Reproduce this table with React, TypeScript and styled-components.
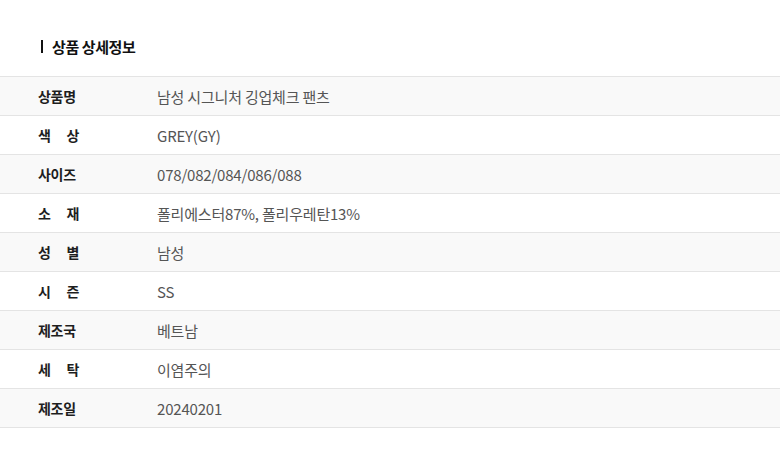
import { createGlobalStyle } from 'styled-components';
import styled from 'styled-components';

const GlobalStyle = createGlobalStyle`
  html, body {
    margin: 0;
    padding: 0;
    background: #fff;
  }
  body {
    font-family: 'Noto Sans CJK KR', 'Noto Sans', sans-serif;
  }
`;

const Root = styled.section`
  padding-top: 36px;
  width: 780px;
`;

const Title = styled.h3`
  display: flex;
  align-items: center;
  gap: 9px;
  margin: 0 0 20px 41px;
  height: 20px;
  font-size: 15px;
  font-weight: 700;
  color: #111;
  letter-spacing: -0.4px;

  &::before {
    content: '';
    display: block;
    width: 2px;
    height: 13px;
    background: #111;
  }
`;

const Table = styled.div`
  border-top: 1px solid #e4e4e4;
`;

const Row = styled.div<{ shaded: boolean }>`
  display: flex;
  align-items: center;
  height: 38px;
  border-bottom: 1px solid #e4e4e4;
  background: ${({ shaded }) => (shaded ? '#f9f9f9' : '#fff')};
`;

const Label = styled.div`
  width: 41px;
  margin-left: 38px;
  margin-right: 78px;
  font-size: 14px;
  font-weight: 700;
  color: #1e1e1e;
  letter-spacing: -0.3px;
  text-align: justify;
  text-align-last: justify;
  white-space: nowrap;
`;

const Value = styled.div`
  font-size: 15px;
  color: #555;
  letter-spacing: -0.2px;
`;

const rows: [string, string][] = [
  ['상품명', '남성 시그니처 깅업체크 팬츠'],
  ['색 상', 'GREY(GY)'],
  ['사이즈', '078/082/084/086/088'],
  ['소 재', '폴리에스터87%, 폴리우레탄13%'],
  ['성 별', '남성'],
  ['시 즌', 'SS'],
  ['제조국', '베트남'],
  ['세 탁', '이염주의'],
  ['제조일', '20240201'],
];

export default function App() {
  return (
    <>
      <GlobalStyle />
      <Root>
        <Title>상품 상세정보</Title>
        <Table>
          {rows.map(([label, value], i) => (
            <Row key={label} shaded={i % 2 === 0}>
              <Label>{label}</Label>
              <Value>{value}</Value>
            </Row>
          ))}
        </Table>
      </Root>
    </>
  );
}
